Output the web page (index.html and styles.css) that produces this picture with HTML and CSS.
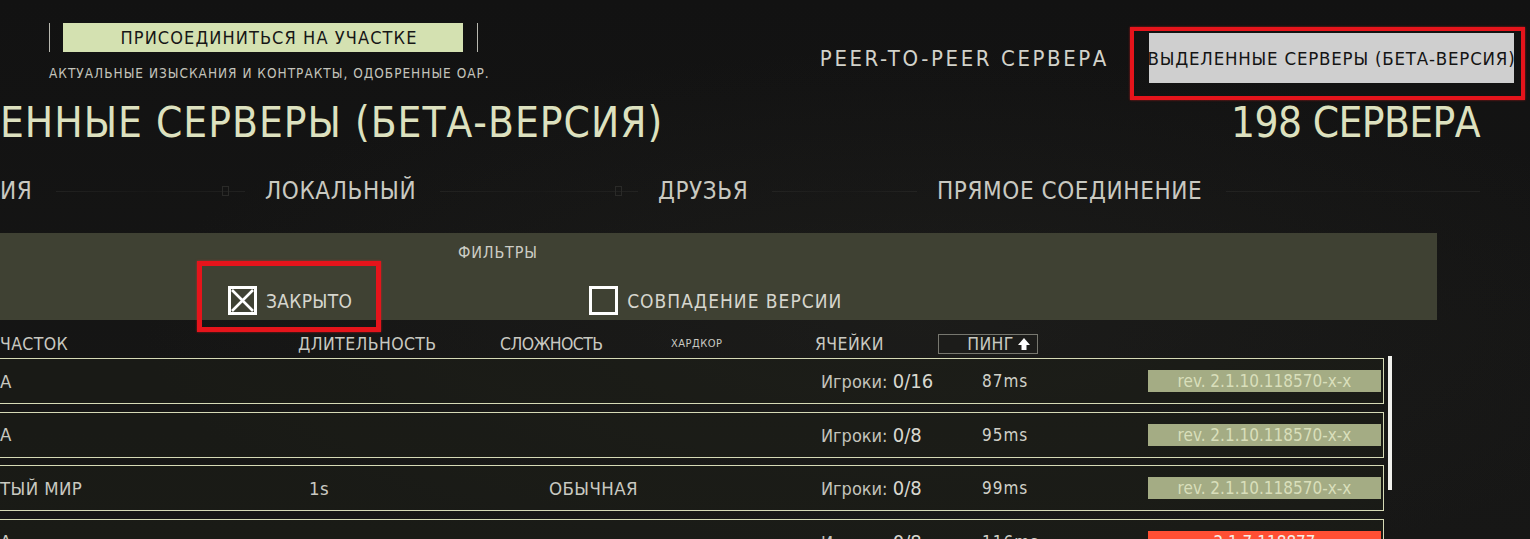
FILE: index.html
```html
<!DOCTYPE html>
<html lang="ru">
<head>
<meta charset="utf-8">
<title>Серверы</title>
<link rel="stylesheet" href="styles.css">
</head>
<body>
<div class="screen">
  <header class="top">
    <div class="join">
      <div class="join-bar">
        <span class="vline"></span>
        <span class="join-btn">ПРИСОЕДИНИТЬСЯ НА УЧАСТКЕ</span>
        <span class="vline"></span>
      </div>
      <p class="join-sub">АКТУАЛЬНЫЕ ИЗЫСКАНИЯ И КОНТРАКТЫ, ОДОБРЕННЫЕ ОАР.</p>
    </div>
    <div class="modes">
      <span class="mode">PEER-TO-PEER СЕРВЕРА</span>
      <div class="mode-frame"><span class="mode-btn">ВЫДЕЛЕННЫЕ СЕРВЕРЫ (БЕТА-ВЕРСИЯ)</span></div>
    </div>
  </header>

  <div class="title-row">
    <h1 class="title">ЕННЫЕ СЕРВЕРЫ (БЕТА-ВЕРСИЯ)</h1>
    <span class="count">198 СЕРВЕРА</span>
  </div>

  <nav class="tabs">
    <div class="tab t1"><span class="tab-label">ИЯ</span><span class="deco"><i class="sq"></i></span></div>
    <div class="tab t2"><span class="tab-label">ЛОКАЛЬНЫЙ</span><span class="deco"><i class="sq"></i></span></div>
    <div class="tab t3"><span class="tab-label">ДРУЗЬЯ</span><span class="deco"></span></div>
    <div class="tab t4"><span class="tab-label">ПРЯМОЕ СОЕДИНЕНИЕ</span><span class="deco"></span></div>
  </nav>

  <section class="filters">
    <div class="filters-title">ФИЛЬТРЫ</div>
    <div class="checks">
      <label class="check marked">
        <svg class="box" viewBox="0 0 29 29" width="29" height="29"><rect x="1.5" y="1.5" width="26" height="26" fill="none" stroke="#fff" stroke-width="3"/><path d="M4 4 L25 25 M25 4 L4 25" stroke="#fff" stroke-width="2.6"/></svg>
        <span class="check-label">ЗАКРЫТО</span>
      </label>
      <label class="check">
        <svg class="box" viewBox="0 0 29 29" width="29" height="29"><rect x="1.5" y="1.5" width="26" height="26" fill="none" stroke="#fff" stroke-width="3"/></svg>
        <span class="check-label">СОВПАДЕНИЕ ВЕРСИИ</span>
      </label>
    </div>
  </section>

  <div class="thead">
    <span class="th">ЧАСТОК</span>
    <span class="th">ДЛИТЕЛЬНОСТЬ</span>
    <span class="th th-tight">СЛОЖНОСТЬ</span>
    <span class="th th-small">ХАРДКОР</span>
    <span class="th">ЯЧЕЙКИ</span>
    <span class="th th-sort">ПИНГ<svg class="arrow" viewBox="0 0 14 14" width="14" height="14"><path d="M7 1 L13 8 L9.5 8 L9.5 13 L4.5 13 L4.5 8 L1 8 Z" fill="#fff"/></svg></span>
  </div>

  <div class="list">
    <div class="rows">
      <div class="row">
        <span class="c-name">А</span><span class="c-dur"></span><span class="c-diff"></span>
        <span class="c-players">Игроки: <b>0/16</b></span><span class="c-ping">87ms</span>
        <span class="badge">rev. 2.1.10.118570-x-x</span>
      </div>
      <div class="row">
        <span class="c-name">А</span><span class="c-dur"></span><span class="c-diff"></span>
        <span class="c-players">Игроки: <b>0/8</b></span><span class="c-ping">95ms</span>
        <span class="badge">rev. 2.1.10.118570-x-x</span>
      </div>
      <div class="row">
        <span class="c-name">ТЫЙ МИР</span><span class="c-dur">1s</span><span class="c-diff">ОБЫЧНАЯ</span>
        <span class="c-players">Игроки: <b>0/8</b></span><span class="c-ping">99ms</span>
        <span class="badge">rev. 2.1.10.118570-x-x</span>
      </div>
      <div class="row">
        <span class="c-name">А</span><span class="c-dur"></span><span class="c-diff"></span>
        <span class="c-players">Игроки: <b>0/8</b></span><span class="c-ping">116ms</span>
        <span class="badge badge-bad">2.1.7.118877</span>
      </div>
    </div>
    <div class="scrollbar"></div>
  </div>
</div>
</body>
</html>
```

FILE: styles.css
```css
*, *::before, *::after { box-sizing: border-box; }
html, body { margin: 0; padding: 0; }
body {
  width: 1530px;
  height: 539px;
  overflow: hidden;
  background: #151515;
  font-family: "DejaVu Sans Condensed", "Liberation Sans Narrow", "DejaVu Sans", sans-serif;
  font-stretch: condensed;
  color: #c9c9c1;
}
.screen {
  width: 1530px;
  height: 539px;
  overflow: hidden;
  background:
    radial-gradient(ellipse at 60% 60%, rgba(40,40,36,0.35), rgba(0,0,0,0) 60%),
    linear-gradient(#121212, #171716);
}

/* top */
.top { display: flex; justify-content: space-between; height: 101px; }
.join { padding: 23px 0 0 49px; }
.join-bar { display: flex; align-items: stretch; height: 29px; }
.vline { width: 1px; background: #b8b8b0; }
.join-btn {
  margin: 0 14px 0 13px;
  width: 400px;
  padding-left: 12px;
  background: #d4e1b1;
  color: #161616;
  font-size: 18px;
  letter-spacing: 1.1px;
  display: flex; align-items: center; justify-content: center;
}
.join-sub {
  margin: 13px 0 0;
  font-size: 13.5px;
  line-height: 16px;
  letter-spacing: 1px;
  color: #c4c4bc;
}
.modes { display: flex; align-items: flex-start; padding: 27px 5px 0 0; }
.mode {
  margin-top: 19px;
  font-size: 22px;
  line-height: 26px;
  letter-spacing: 2.6px;
  color: #d2d2ca;
}
.mode-frame {
  margin-left: 21px;
  border: 4px solid #e5141b;
  box-shadow: 0 0 2px rgba(255,30,30,0.6);
  padding: 2px 7px 13px 15px;
}
.mode-btn {
  display: flex; align-items: center; justify-content: center;
  width: 365px; height: 50px;
  background: #cfcfcf;
  color: #141414;
  font-size: 18.5px;
  letter-spacing: 0.8px;
  white-space: nowrap;
}

/* title */
.title-row { display: flex; justify-content: space-between; padding-right: 50px; }
.title, .count {
  margin: 0;
  font-weight: normal;
  font-size: 42px;
  line-height: 44px;
  color: #dde1bf;
  white-space: nowrap;
}
.title { letter-spacing: 1px; }
.count { letter-spacing: -0.6px; }

/* tabs */
.tabs {
  margin-top: 32px;
  display: grid;
  grid-template-columns: 265px 393px 279px 1fr;
  height: 28px;
}
.tab { display: flex; align-items: center; }
.tab-label { font-size: 24px; line-height: 28px; color: #c9c9c1; white-space: nowrap; letter-spacing: 0.6px; }
.deco {
  flex: 1;
  position: relative;
  height: 1px;
  margin: 0 20px 0 24px;
  background: linear-gradient(90deg, rgba(50,50,48,0.45), rgba(50,50,48,0.1) 50%, rgba(50,50,48,0.45));
}
.sq {
  position: absolute; right: 16px; top: -5px;
  width: 7px; height: 10px;
  border: 1px solid #2a2a28;
}
.t4 .deco { margin-right: 50px; }

/* filters */
.filters {
  margin-top: 28px;
  width: 1437px;
  height: 87px;
  background: #3f4133;
  padding-top: 11px;
}
.filters-title {
  padding-left: 458px;
  font-size: 16px;
  line-height: 18px;
  letter-spacing: 0.8px;
  color: #cdcdc5;
}
.checks { display: flex; margin-top: 24px; padding-left: 228px; }
.check { position: relative; display: flex; align-items: center; gap: 9px; }
.check + .check { margin-left: 237px; }
.box { display: block; }
.check-label { font-size: 19px; line-height: 22px; color: #d6d6ce; white-space: nowrap; letter-spacing: 0.3px; }
.check + .check .check-label { letter-spacing: 1px; }
.marked::after {
  content: "";
  position: absolute;
  left: -31px; top: -25px;
  width: 184px; height: 71px;
  border: 5px solid #e5141b;
  box-shadow: 0 0 2px rgba(255,30,30,0.6);
}

/* header */
.thead {
  margin-top: 14px;
  display: grid;
  grid-template-columns: 298px 202px 171px 144px 123px 100px;
  align-items: center;
  height: 20px;
}
.th { font-size: 17.5px; line-height: 20px; color: #c9c9c1; white-space: nowrap; letter-spacing: 0.4px; }
.th-tight { letter-spacing: -0.6px; }
.th-small { font-size: 11px; letter-spacing: 0.5px; }
.th-sort {
  display: flex; align-items: center; justify-content: center; gap: 3px;
  height: 20px;
  border: 1px solid #77776f;
  background: #1c1c1a;
  padding-left: 22px;
  letter-spacing: 0.4px;
}
.arrow { display: block; }

/* list */
.list { margin-top: 4px; display: flex; align-items: flex-start; }
.rows { width: 1384px; display: flex; flex-direction: column; gap: 7.5px; }
.row {
  height: 46px;
  border: 1px solid #d6dab6;
  border-left: none;
  background: rgba(30,31,24,0.55);
  display: grid;
  grid-template-columns: 309px 240px 272px 161px 166px 233px;
  align-items: center;
}
.c-name, .c-dur, .c-diff { font-size: 18.5px; color: #c9c9c1; white-space: nowrap; letter-spacing: 0.4px; }
.c-players { font-size: 18px; color: #c4c4bc; white-space: nowrap; }
.c-players b { font-weight: normal; font-size: 20px; color: #d8d8d0; }
.c-ping { font-size: 17px; letter-spacing: 1px; color: #d0d0c8; }
.badge {
  height: 22px;
  background: #a4ac84;
  color: #d9dfbb;
  font-size: 17px;
  display: flex; align-items: center; justify-content: center;
  white-space: nowrap;
}
.badge-bad { background: #ff4f33; color: #f3f0e8; }
.scrollbar { width: 4px; height: 134px; margin: -2px 0 0 4px; background: #f0f0ec; }
```
